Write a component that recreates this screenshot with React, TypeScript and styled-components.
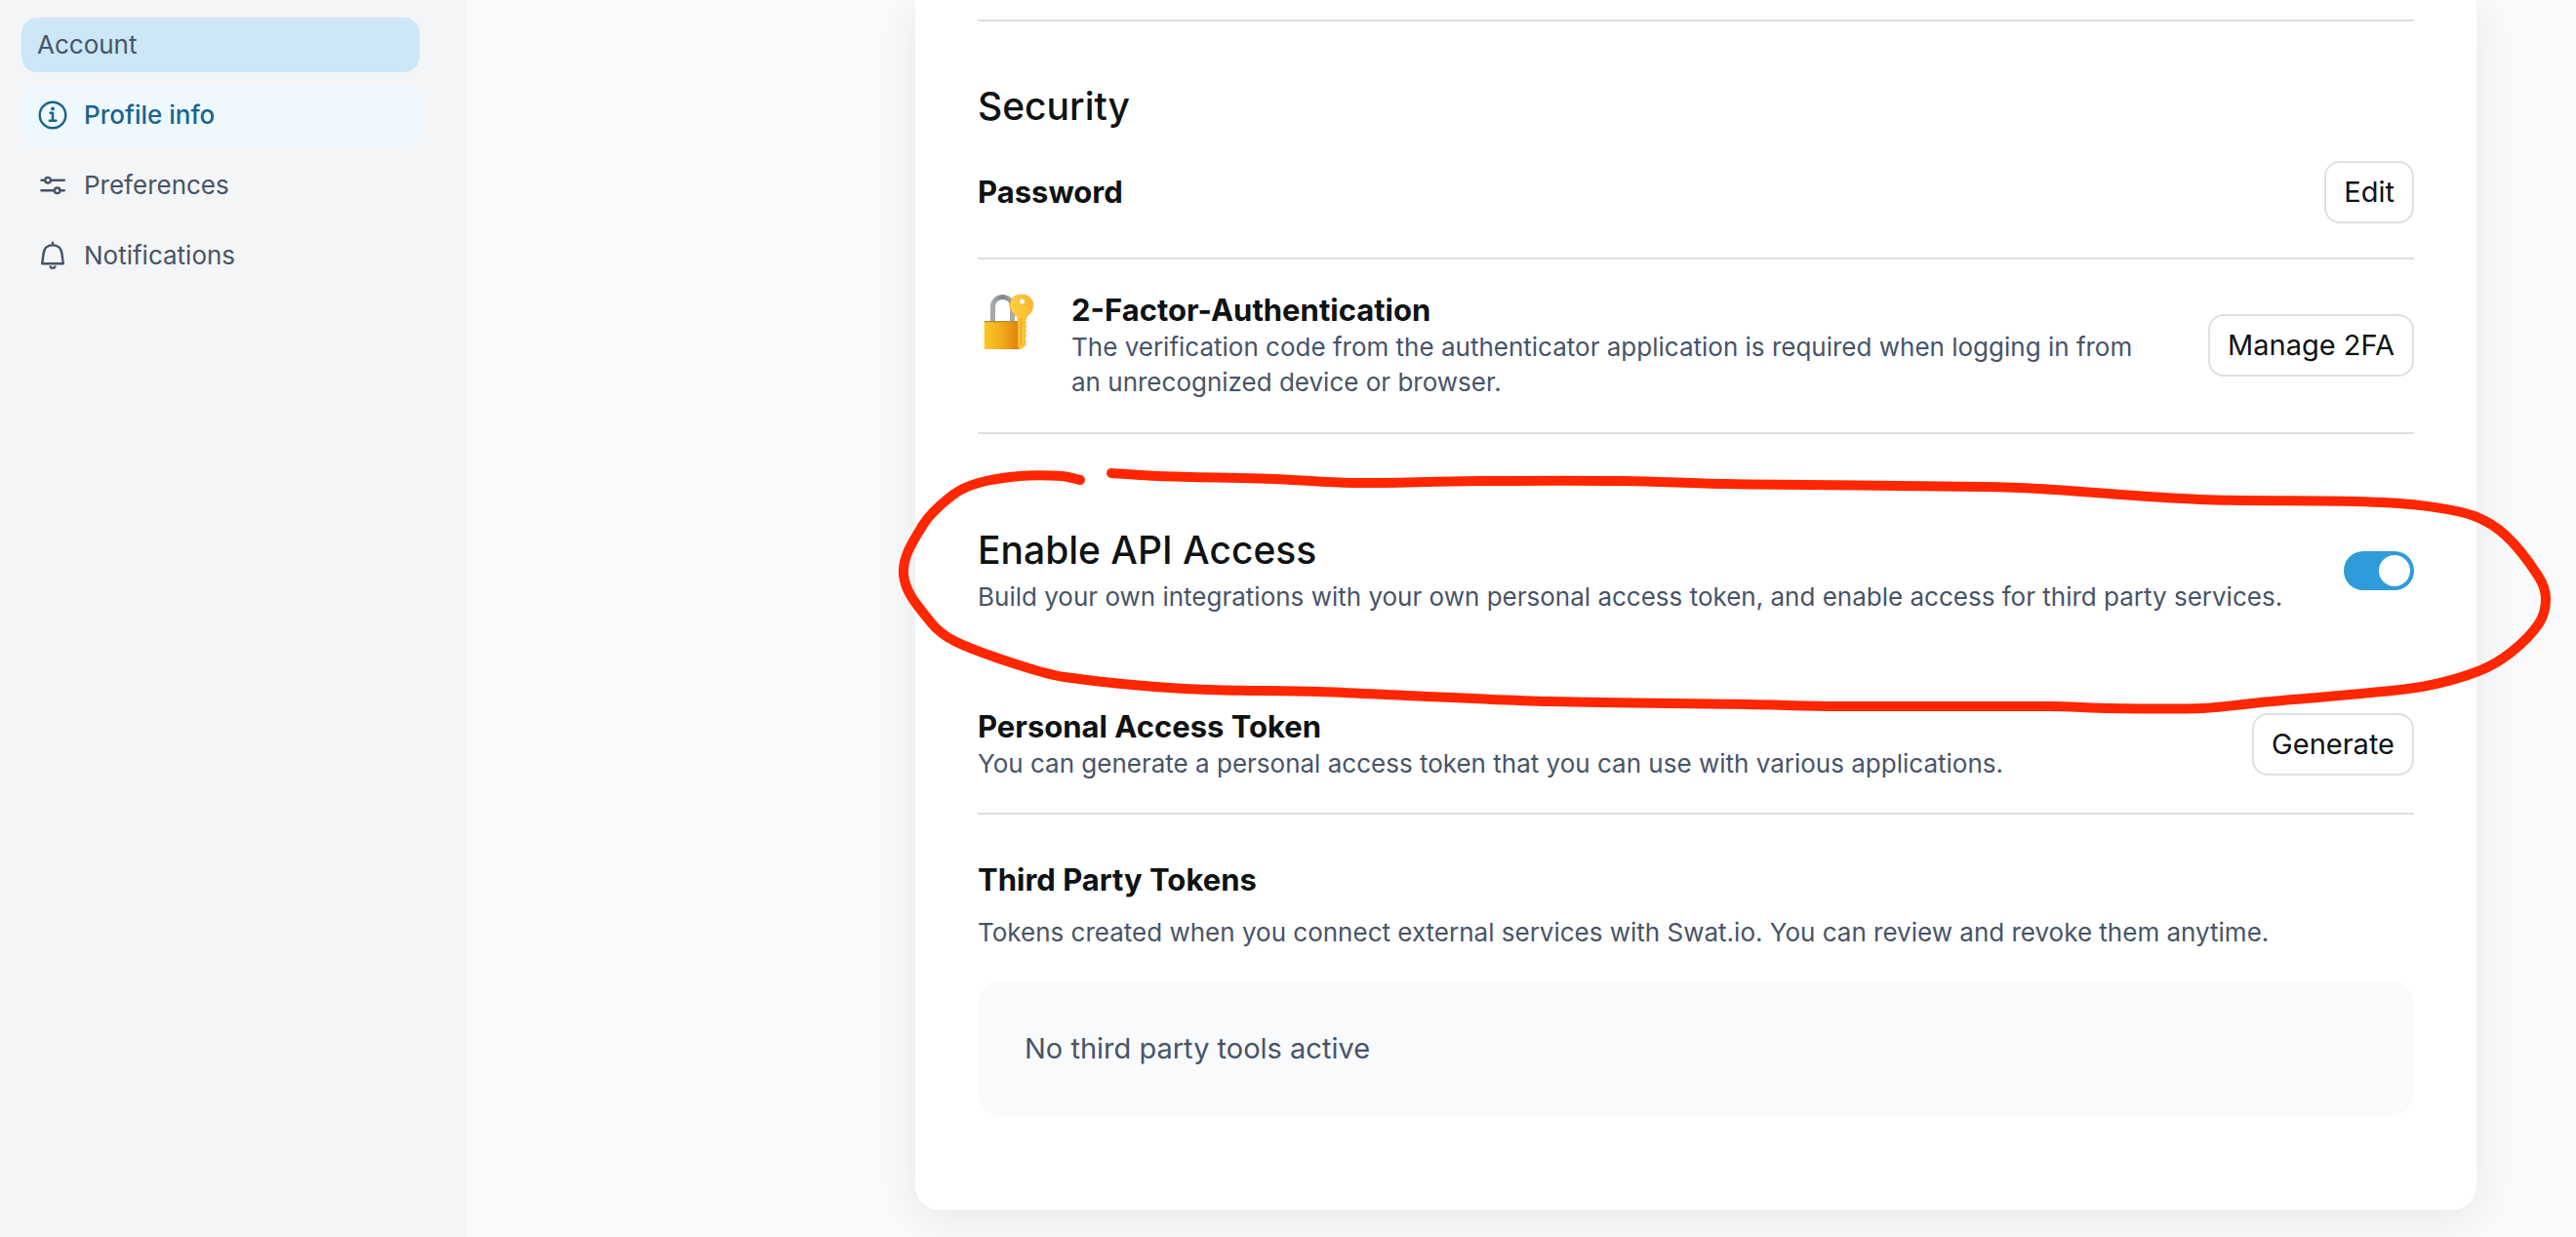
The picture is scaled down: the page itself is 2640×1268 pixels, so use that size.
import React from "react";
import styled, { createGlobalStyle } from "styled-components";

const color = {
  ink: "#0f1213",
  body: "#475467",
  accent: "#17648f",
  line: "#dde0e2",
  page: "#f9fafc",
  rail: "#f3f5f7",
  switchOn: "#2f9bda",
  marker: "#ff2600",
};

const GlobalStyle = createGlobalStyle`
  *, *::before, *::after { box-sizing: border-box; }
  body {
    margin: 0;
    background: ${color.page};
    color: ${color.ink};
    font-family: Inter, "Liberation Sans", sans-serif;
    font-size: 26px;
    line-height: 36px;
  }
`;

const Page = styled.div`
  display: flex;
  min-height: 100vh;
  overflow: hidden;
`;

const Sidebar = styled.nav`
  flex: none;
  width: 478px;
  padding: 18px 48px 18px 22px;
  background: ${color.rail};
`;

const SidebarTitle = styled.h2`
  margin: 0 0 12px;
  padding: 10px 16px;
  border-radius: 16px;
  background: #cde7f7;
  color: ${color.body};
  font-size: 26px;
  font-weight: 400;
  line-height: 36px;
`;

const NavList = styled.ul`
  display: grid;
  gap: 8px;
  margin: 0;
  padding: 0;
  list-style: none;
`;

const NavLink = styled.a<{ $active?: boolean }>`
  display: flex;
  align-items: center;
  gap: 16px;
  height: 64px;
  padding: 0 16px;
  border-radius: 16px;
  background: ${(p) => (p.$active ? "#eff8fe" : "transparent")};
  color: ${(p) => (p.$active ? color.accent : color.body)};
  font-weight: ${(p) => (p.$active ? 500 : 400)};
  text-decoration: none;
`;

const NavIcon = styled.svg`
  flex: none;
  width: 32px;
  height: 32px;
  fill: none;
  stroke: currentColor;
  stroke-width: 2.4;
  stroke-linecap: round;
  stroke-linejoin: round;
`;

const Main = styled.main`
  flex: 1;
  min-width: 0;
  padding: 0 102px 28px 48px;
`;

const Card = styled.div`
  max-width: 1600px;
  margin-left: auto;
  padding: 20px 64px 96px;
  border-radius: 0 0 24px 24px;
  background: #fff;
  box-shadow: 0 8px 48px rgba(0, 0, 0, 0.08);
`;

const Divider = styled.hr`
  height: 2px;
  margin: 0;
  border: 0;
  background: ${color.line};
`;

const Security = styled.section`
  padding-top: 63px;
`;

const Heading = styled.h2`
  margin: 0;
  font-size: 39px;
  font-weight: 500;
  line-height: 48px;
`;

const Title = styled.h3`
  margin: 0;
  font-size: 31px;
  font-weight: 700;
  line-height: 40px;
`;

const Text = styled.p`
  margin: 0;
  color: ${color.body};
`;

const PasswordRow = styled.div`
  display: flex;
  align-items: center;
  justify-content: space-between;
  padding: 32px 0 35px;
`;

const FactorRow = styled.div`
  display: flex;
  align-items: center;
  gap: 32px;
  padding: 32px 0 33px;
`;

const LockIcon = styled.svg`
  flex: none;
  align-self: flex-start;
  width: 64px;
  height: 64px;
`;

const Copy = styled.div`
  flex: 1;
  min-width: 0;
  padding-right: 32px;
`;

const Button = styled.button`
  flex: none;
  height: 64px;
  padding: 0 18px;
  border: 2px solid ${color.line};
  border-radius: 16px;
  background: #fff;
  color: ${color.ink};
  font-family: inherit;
  font-size: 29px;
  line-height: 40px;
`;

const ApiSection = styled.section`
  position: relative;
  display: flex;
  align-items: center;
  justify-content: space-between;
  gap: 32px;
  padding: 95px 0;
`;

const ApiCopy = styled.div`
  display: grid;
  gap: 6px;
`;

const Marker = styled.svg`
  position: absolute;
  top: 25px;
  left: -90px;
  width: 1710px;
  height: 270px;
  overflow: visible;
  pointer-events: none;
  fill: none;
  stroke: ${color.marker};
  stroke-width: 10;
  stroke-linecap: round;
  stroke-linejoin: round;
`;

const Switch = styled.input`
  flex: none;
  appearance: none;
  width: 72px;
  height: 40px;
  margin: 0;
  padding: 4px;
  border-radius: 20px;
  background: #c3cad2;

  &::before {
    content: "";
    display: block;
    width: 32px;
    height: 32px;
    border-radius: 50%;
    background: #fff;
  }

  &:checked {
    background: ${color.switchOn};
  }

  &:checked::before {
    margin-left: auto;
  }
`;

const TokenRow = styled.section`
  display: flex;
  align-items: center;
  justify-content: space-between;
  gap: 32px;
  padding-bottom: 32px;
`;

const ThirdParty = styled.section`
  display: grid;
  gap: 16px;
  padding-top: 47px;
`;

const EmptyState = styled.p`
  margin: 16px 0 0;
  padding: 48px;
  border-radius: 24px;
  background: ${color.page};
  color: ${color.body};
  font-size: 29px;
  line-height: 42px;
`;

/* Outline of the hand-drawn ring, in drawing order. */
const ring: [number, number][] = [
  [1139, 485], [1187, 488], [1306, 491], [1386, 495], [1518, 493],
  [1664, 493], [1767, 496], [2031, 499], [2089, 501], [2255, 512],
  [2413, 514], [2480, 518], [2533, 528], [2567, 548], [2601, 590],
  [2609, 613], [2602, 639], [2573, 669], [2540, 688], [2487, 703], [2430, 710],
  [2317, 720], [2258, 726], [2163, 726], [2100, 724], [1888, 724], [1790, 722],
  [1589, 719], [1440, 713], [1352, 709], [1214, 706], [1091, 694], [1045, 682],
  [980, 658], [954, 638], [926, 589], [946, 538],
  [977, 507], [1003, 495], [1045, 488], [1088, 488], [1107, 492],
];

function smoothPath(points: [number, number][]) {
  let d = `M${points[0][0]} ${points[0][1]}`;
  for (let i = 0; i < points.length - 1; i++) {
    const a = points[Math.max(i - 1, 0)];
    const b = points[i];
    const c = points[i + 1];
    const e = points[Math.min(i + 2, points.length - 1)];
    const reach = Math.hypot(c[0] - b[0], c[1] - b[1]) / 3;
    const inLen = Math.hypot(c[0] - a[0], c[1] - a[1]) || 1;
    const outLen = Math.hypot(e[0] - b[0], e[1] - b[1]) || 1;
    const x1 = b[0] + ((c[0] - a[0]) / inLen) * reach;
    const y1 = b[1] + ((c[1] - a[1]) / inLen) * reach;
    const x2 = c[0] - ((e[0] - b[0]) / outLen) * reach;
    const y2 = c[1] - ((e[1] - b[1]) / outLen) * reach;
    d += `C${x1} ${y1} ${x2} ${y2} ${c[0]} ${c[1]}`;
  }
  return d;
}

const ringPath = smoothPath(ring);

function InfoIcon() {
  return (
    <NavIcon viewBox="0 0 32 32" aria-hidden="true">
      <circle cx="16" cy="16" r="13.3" />
      <circle cx="16" cy="9.4" r="1.9" fill="currentColor" stroke="none" />
      <path d="M13.6 13.8H16V21.8M12.8 21.8H19.4" />
    </NavIcon>
  );
}

function SlidersIcon() {
  return (
    <NavIcon viewBox="0 0 32 32" aria-hidden="true">
      <path d="M4.4 10.7H8.2M14 10.7H27.8M4.4 21.3H17.8M23.6 21.3H27.8" />
      <circle cx="11.1" cy="10.7" r="2.8" />
      <circle cx="20.7" cy="21.3" r="2.8" />
    </NavIcon>
  );
}

function BellIcon() {
  return (
    <NavIcon viewBox="0 0 32 32" aria-hidden="true">
      <path d="M16 2.8V5M16 5.2C10.4 5.2 7 8.8 6.6 14L5.2 24.2H26.8L25.4 14C25 8.8 21.6 5.2 16 5.2Z" />
      <path d="M13.6 27.4C14.2 29.3 17.8 29.3 18.4 27.4" />
    </NavIcon>
  );
}

function LockWithKey() {
  return (
    <LockIcon viewBox="0 0 64 64" aria-hidden="true">
      <defs>
        <linearGradient id="lockBody" x1="0" x2="1">
          <stop offset="0" stopColor="#fbc82a" />
          <stop offset="0.5" stopColor="#f2ab1c" />
          <stop offset="1" stopColor="#dd7f0c" />
        </linearGradient>
        <linearGradient id="shackle" x1="0" x2="1">
          <stop offset="0" stopColor="#a6abb0" />
          <stop offset="0.5" stopColor="#7d8286" />
          <stop offset="1" stopColor="#a6abb0" />
        </linearGradient>
        <linearGradient id="keyMetal" x1="0" x2="1">
          <stop offset="0" stopColor="#ffcf45" />
          <stop offset="1" stopColor="#f8b928" />
        </linearGradient>
      </defs>
      <path d="M15.4 32V16.5C15.4 10.5 19.8 6.4 25.5 6.4S35.6 10.5 35.6 16.5V32" fill="none" stroke="url(#shackle)" strokeWidth="5" />
      <rect x="6.7" y="31" width="35.8" height="29" rx="1" fill="url(#lockBody)" />
      <path d="M6.7 31.6H42.5" stroke="#b98a2c" strokeWidth="1.2" />
      <path
        fill="url(#keyMetal)"
        stroke="#eba51b"
        strokeWidth="0.6"
        fillRule="evenodd"
        d="M44.8 4C51.8 4 56.8 8.6 56.8 14.6C56.8 19.4 54.4 23.6 50 26.4V28.6L48.4 30.6L49.6 32.6L48.4 34.8L49.8 37L48.4 39.2L49.8 41.4L48.4 43.8L49.8 46.2L48.2 48.6L49 51V55.6L43.8 60L41 57.2V26.8C36.2 24 33 19.6 33 14.6C33 8.6 37.8 4 44.8 4ZM45.4 8A3 3 0 1 0 45.4 14A3 3 0 1 0 45.4 8Z"
      />
      <path d="M44.4 28V56" stroke="#eeac22" strokeWidth="1.2" />
    </LockIcon>
  );
}

export default function App() {
  return (
    <Page>
      <GlobalStyle />
      <Sidebar aria-label="Account settings">
        <SidebarTitle>Account</SidebarTitle>
        <NavList>
          <li>
            <NavLink href="#profile" $active aria-current="page">
              <InfoIcon />
              Profile info
            </NavLink>
          </li>
          <li>
            <NavLink href="#preferences">
              <SlidersIcon />
              Preferences
            </NavLink>
          </li>
          <li>
            <NavLink href="#notifications">
              <BellIcon />
              Notifications
            </NavLink>
          </li>
        </NavList>
      </Sidebar>

      <Main>
        <Card>
          <Divider />
          <Security>
            <Heading>Security</Heading>
            <PasswordRow>
              <Title>Password</Title>
              <Button type="button">Edit</Button>
            </PasswordRow>
            <Divider />
            <FactorRow>
              <LockWithKey />
              <Copy>
                <Title>2-Factor-Authentication</Title>
                <Text>
                  The verification code from the authenticator application is required when logging in from an
                  unrecognized device or browser.
                </Text>
              </Copy>
              <Button type="button">Manage 2FA</Button>
            </FactorRow>
            <Divider />
          </Security>

          <ApiSection>
            <ApiCopy>
              <Heading as="label" htmlFor="api-access">
                Enable API Access
              </Heading>
              <Text id="api-access-note">
                Build your own integrations with your own personal access token, and enable access for third party
                services.
              </Text>
            </ApiCopy>
            <Switch type="checkbox" role="switch" id="api-access" aria-describedby="api-access-note" defaultChecked />
            <Marker viewBox="912 470 1710 270" aria-hidden="true">
              <path d={ringPath} />
            </Marker>
          </ApiSection>

          <TokenRow>
            <Copy>
              <Title>Personal Access Token</Title>
              <Text>You can generate a personal access token that you can use with various applications.</Text>
            </Copy>
            <Button type="button">Generate</Button>
          </TokenRow>
          <Divider />

          <ThirdParty>
            <Title>Third Party Tokens</Title>
            <Text>
              Tokens created when you connect external services with Swat.io. You can review and revoke them anytime.
            </Text>
            <EmptyState>No third party tools active</EmptyState>
          </ThirdParty>
        </Card>
      </Main>
    </Page>
  );
}
